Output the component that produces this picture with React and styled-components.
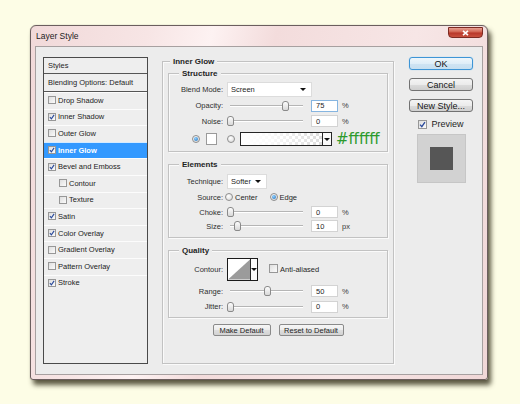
import React from 'react';
import styled, { createGlobalStyle } from 'styled-components';

const GlobalStyle = createGlobalStyle`
  html, body { margin: 0; padding: 0; }
  body {
    background: #fdfde6;
    font-family: 'Liberation Sans', Arial, sans-serif;
    color: #262626;
  }
`;

const Page = styled.div`
  width: 520px;
  height: 404px;
  box-sizing: border-box;
  padding: 25px 0 0 30px;
  background: #fdfde6;
`;

const Window = styled.div`
  width: 458px;
  height: 355px;
  box-sizing: border-box;
  display: flex;
  flex-direction: column;
  padding: 0 4px 4px;
  border: 1px solid #6b5e5e;
  border-radius: 6px 6px 3px 3px;
  background: linear-gradient(103deg, #f1d9d9 0%, #f7e5e5 22%, #fdf2f2 34%, #f3dcdc 46%, #f7e6e6 72%, #f0d7d7 100%);
  box-shadow: 3px 5px 5px rgba(48, 44, 22, 0.78), 0 0 1px rgba(0, 0, 0, 0.4);
`;

const TitleBar = styled.div`
  height: 20px;
  display: flex;
  justify-content: space-between;
`;

const Title = styled.span`
  align-self: center;
  padding-left: 1px;
  font-size: 8.5px;
  color: #1c1c1c;
`;

const CloseButton = styled.div`
  width: 35px;
  height: 11px;
  margin-top: 1px;
  box-sizing: border-box;
  display: flex;
  align-items: center;
  justify-content: center;
  border: 1px solid #7d2a22;
  border-radius: 0 0 4px 4px;
  background: linear-gradient(#e7a193 0%, #d0614f 45%, #b8372a 55%, #c9513f 100%);
`;

const Panel = styled.div`
  flex: 1;
  display: flex;
  align-items: flex-start;
  padding: 10px 0 0 7px;
  border: 1px solid #a7a0a0;
  background: #ececec;
`;

/* ---- left list ---- */

const StylesList = styled.div`
  width: 105px;
  height: 307px;
  box-sizing: border-box;
  border: 1px solid #4a4a4a;
  background: #eeeeee;
  font-size: 7.5px;
`;

const HeadRow = styled.div`
  height: ${p => p.$h}px;
  display: flex;
  align-items: center;
  padding-left: 4px;
  border-bottom: 1px solid #555;
  color: #1e1e1e;
`;

const EffectRow = styled.div`
  height: 16.6px;
  box-sizing: border-box;
  display: flex;
  align-items: center;
  gap: 2px;
  padding-left: ${p => (p.$indent ? 15 : 4)}px;
  background: ${p => (p.$active ? '#3399ff' : 'transparent')};
  color: ${p => (p.$active ? '#fff' : '#222')};
  font-weight: ${p => (p.$active ? 'bold' : 'normal')};
  box-shadow: inset 0 1px 0 rgba(255, 255, 255, 0.8);
`;

const Box = styled.span`
  width: ${p => p.$size}px;
  height: ${p => p.$size}px;
  flex-shrink: 0;
  box-sizing: border-box;
  display: inline-flex;
  align-items: center;
  justify-content: center;
  border: 1px solid #979797;
  background: linear-gradient(135deg, #dedede, #fbfbfb);
`;

const Checkbox = ({ checked, size = 8 }) => (
  <Box $size={size}>
    {checked && (
      <svg width={size - 2} height={size - 2} viewBox="0 0 8 8">
        <path d="M1.2 4.2 L3.2 6.4 L6.8 1.2" fill="none" stroke="#2a4a9c" strokeWidth="1.5" />
      </svg>
    )}
  </Box>
);

/* ---- middle groups ---- */

const MainGroup = styled.fieldset`
  width: 232px;
  height: 307px;
  margin: 0 0 0 14px;
  padding: 3px 5px 0;
  box-sizing: border-box;
  min-width: 0;
  border: 1px solid #c2c2c2;
  box-shadow: 1px 1px 0 #fafafa, inset 1px 1px 0 #fafafa;
`;

const SubGroup = styled.fieldset`
  margin: ${p => p.$mt || 0}px 0 0;
  padding: ${p => p.$pt}px 0 ${p => p.$pb}px;
  min-width: 0;
  border: 1px solid #c2c2c2;
  box-shadow: 1px 1px 0 #fafafa, inset 1px 1px 0 #fafafa;
`;

const Legend = styled.legend`
  margin-left: ${p => p.$ml}px;
  padding: 0 3px;
  line-height: 9px;
  font-size: 8px;
  font-weight: bold;
  color: #1f1f1f;
  background: #ececec;
`;

const Row = styled.div`
  height: ${p => p.$h}px;
  display: flex;
  align-items: center;
  padding-left: ${p => p.$pl || 0}px;
  font-size: 7.5px;
`;

const Label = styled.span`
  width: 54px;
  margin-right: 4px;
  flex-shrink: 0;
  text-align: right;
  color: #2e2e2e;
`;

const Select = styled.div`
  width: ${p => p.$w}px;
  height: 15px;
  box-sizing: border-box;
  display: flex;
  align-items: center;
  justify-content: space-between;
  padding: 0 5px 0 3px;
  border: 1px solid #dcdcdc;
  background: #fff;
`;

const Arrow = styled.span`
  width: 0;
  height: 0;
  border-left: 3px solid transparent;
  border-right: 3px solid transparent;
  border-top: 3px solid #111;
`;

const Track = styled.div`
  position: relative;
  width: 73px;
  height: 2px;
  margin-left: 3px;
  box-sizing: border-box;
  border-top: 1px solid #b5b5b5;
  border-bottom: 1px solid #fff;
`;

const Thumb = styled.span`
  position: absolute;
  top: -5px;
  width: 5px;
  height: 8px;
  margin-left: -3px;
  border: 1px solid #8a8a8a;
  border-radius: 3px 3px 2px 2px;
  background: linear-gradient(#fdfdfd, #d8d8d8);
`;

const Field = styled.span`
  width: 27px;
  height: 12px;
  margin-left: 8px;
  box-sizing: border-box;
  display: flex;
  align-items: center;
  padding-left: 4px;
  border: 1px solid ${p => (p.$focus ? '#86b5e0' : '#d3d3d3')};
  background: #fff;
`;

const Unit = styled.span`
  margin-left: 4px;
  color: #3a3a3a;
`;

const Slider = ({ label, value, pos, unit = '%', focus }) => (
  <>
    <Label>{label}</Label>
    <Track>
      <Thumb style={{ left: `${pos}%` }} />
    </Track>
    <Field $focus={focus}>{value}</Field>
    <Unit>{unit}</Unit>
  </>
);

const Radio = styled.span`
  width: 8px;
  height: 8px;
  margin-left: ${p => p.$ml || 0}px;
  flex-shrink: 0;
  box-sizing: border-box;
  display: inline-flex;
  align-items: center;
  justify-content: center;
  border: 1px solid #8e8e8e;
  border-radius: 50%;
  background: radial-gradient(circle at 40% 35%, #fff, #d6d6d6);
  &::after {
    content: '';
    display: ${p => (p.$on ? 'block' : 'none')};
    width: 4px;
    height: 4px;
    border-radius: 50%;
    background: radial-gradient(circle at 40% 35%, #8fd0ff, #1c6cb8);
  }
`;

const Text = styled.span`
  margin-left: ${p => p.$ml || 0}px;
`;

const Swatch = styled.span`
  width: 11px;
  height: 12px;
  margin-left: 6px;
  box-sizing: border-box;
  border: 1px solid #9a9a9a;
  background: #fff;
`;

const GradientPicker = styled.div`
  width: 92px;
  height: 14px;
  margin-left: 5px;
  box-sizing: border-box;
  display: flex;
  border: 1px solid #262626;
`;

const GradientFill = styled.span`
  flex: 1;
  background:
    linear-gradient(to right, #fff 0%, rgba(255, 255, 255, 0.85) 35%, rgba(255, 255, 255, 0) 100%),
    repeating-conic-gradient(#dcdcdc 0 25%, #fff 0 50%) 0 0 / 6px 6px;
`;

const PickerButton = styled.span`
  width: ${p => p.$w}px;
  display: flex;
  align-items: center;
  justify-content: center;
  border-left: 1px solid #262626;
  background: #fafafa;
`;

const Hex = styled.span`
  margin-left: 4px;
  font-family: 'DejaVu Sans', sans-serif;
  font-size: 15px;
  line-height: 1;
  color: #2c9a2c;
`;

const ContourPicker = styled.div`
  width: 31px;
  height: 23px;
  box-sizing: border-box;
  display: flex;
  border: 1px solid #1a1a1a;
  background: #fff;
`;

const ButtonRow = styled.div`
  display: flex;
  justify-content: center;
  gap: 8px;
  margin-top: 6px;
`;

const SmallButton = styled.button`
  width: ${p => p.$w}px;
  height: 12px;
  padding: 0;
  border: 1px solid #8a8a8a;
  border-radius: 2px;
  background: linear-gradient(#f6f6f6 0%, #ececec 50%, #dedede 51%, #d2d2d2 100%);
  font-family: inherit;
  font-size: 7.5px;
  color: #1e1e1e;
`;

/* ---- right column ---- */

const Actions = styled.div`
  width: 64px;
  margin-left: 15px;
  display: flex;
  flex-direction: column;
  align-items: center;
  gap: 8px;
`;

const DialogButton = styled.button`
  width: 64px;
  height: 13px;
  padding: 0;
  border: 1px solid ${p => (p.$primary ? '#3d95d6' : '#727272')};
  border-radius: 3px;
  background: ${p =>
    p.$primary
      ? 'linear-gradient(#eef6fb 0%, #dfeef8 50%, #cfe4f3 51%, #c6dff0 100%)'
      : 'linear-gradient(#f4f4f4 0%, #ebebeb 50%, #dcdcdc 51%, #cfcfcf 100%)'};
  box-shadow: ${p => (p.$primary ? '0 0 1px #7cc4f5' : 'none')};
  font-family: inherit;
  font-size: 9px;
  color: #151515;
`;

const PreviewToggle = styled.div`
  height: 16px;
  margin-top: -4px;
  display: flex;
  align-items: center;
  gap: 4px;
  font-size: 9px;
  color: #1e1e1e;
`;

const PreviewSwatch = styled.div`
  width: 49px;
  height: 49px;
  margin-top: -6px;
  box-sizing: border-box;
  display: flex;
  align-items: center;
  justify-content: center;
  border: 1px solid #c6c6c6;
  background: #d2d2d2;
`;

const PreviewSquare = styled.span`
  width: 23px;
  height: 23px;
  background: #565656;
`;

const effects = [
  { name: 'Drop Shadow', on: false },
  { name: 'Inner Shadow', on: true },
  { name: 'Outer Glow', on: false },
  { name: 'Inner Glow', on: true, active: true },
  { name: 'Bevel and Emboss', on: true },
  { name: 'Contour', on: false, indent: true },
  { name: 'Texture', on: false, indent: true },
  { name: 'Satin', on: true },
  { name: 'Color Overlay', on: true },
  { name: 'Gradient Overlay', on: false },
  { name: 'Pattern Overlay', on: false },
  { name: 'Stroke', on: true },
];

export default function App() {
  return (
    <Page>
      <GlobalStyle />
      <Window>
        <TitleBar>
          <Title>Layer Style</Title>
          <CloseButton>
            <svg width="7" height="6" viewBox="0 0 7 6">
              <path d="M1 0.8 L6 5.2 M6 0.8 L1 5.2" stroke="#fff" strokeWidth="1.6" />
            </svg>
          </CloseButton>
        </TitleBar>

        <Panel>
          <StylesList>
            <HeadRow $h={15}>Styles</HeadRow>
            <HeadRow $h={17}>Blending Options: Default</HeadRow>
            {effects.map(e => (
              <EffectRow key={e.name} $indent={e.indent} $active={e.active}>
                <Checkbox checked={e.on} />
                {e.name}
              </EffectRow>
            ))}
          </StylesList>

          <MainGroup>
            <Legend $ml={2}>Inner Glow</Legend>

            <SubGroup $pt={3} $pb={1}>
              <Legend $ml={10}>Structure</Legend>
              <Row $h={16}>
                <Label>Blend Mode:</Label>
                <Select $w={85}>Screen<Arrow /></Select>
              </Row>
              <Row $h={17}>
                <Slider label="Opacity:" value="75" pos={75} focus />
              </Row>
              <Row $h={14}>
                <Slider label="Noise:" value="0" pos={0} />
              </Row>
              <Row $h={22} $pl={23}>
                <Radio $on />
                <Swatch />
                <Radio $ml={10} />
                <GradientPicker>
                  <GradientFill />
                  <PickerButton $w={8}><Arrow /></PickerButton>
                </GradientPicker>
                <Hex>#ffffff</Hex>
              </Row>
            </SubGroup>

            <SubGroup $mt={8} $pt={4} $pb={4}>
              <Legend $ml={10}>Elements</Legend>
              <Row $h={16}>
                <Label>Technique:</Label>
                <Select $w={40}>Softer<Arrow /></Select>
              </Row>
              <Row $h={16}>
                <Label>Source:</Label>
                <Radio $ml={-2} />
                <Text $ml={2}>Center</Text>
                <Radio $ml={12} $on />
                <Text $ml={2}>Edge</Text>
              </Row>
              <Row $h={14}>
                <Slider label="Choke:" value="0" pos={0} />
              </Row>
              <Row $h={14}>
                <Slider label="Size:" value="10" pos={10} unit="px" />
              </Row>
            </SubGroup>

            <SubGroup $mt={8} $pt={3} $pb={5}>
              <Legend $ml={10}>Quality</Legend>
              <Row $h={23}>
                <Label>Contour:</Label>
                <ContourPicker>
                  <svg width="23" height="21" viewBox="0 0 23 21">
                    <polygon points="0,21 23,0 23,21" fill="#9b9b9b" />
                  </svg>
                  <PickerButton $w={6}><Arrow /></PickerButton>
                </ContourPicker>
                <Text $ml={11}><Checkbox size={9} /></Text>
                <Text $ml={2}>Anti-aliased</Text>
              </Row>
              <Row $h={20}>
                <Slider label="Range:" value="50" pos={50} />
              </Row>
              <Row $h={11}>
                <Slider label="Jitter:" value="0" pos={0} />
              </Row>
            </SubGroup>

            <ButtonRow>
              <SmallButton $w={58}>Make Default</SmallButton>
              <SmallButton $w={65}>Reset to Default</SmallButton>
            </ButtonRow>
          </MainGroup>

          <Actions>
            <DialogButton $primary>OK</DialogButton>
            <DialogButton>Cancel</DialogButton>
            <DialogButton>New Style...</DialogButton>
            <PreviewToggle>
              <Checkbox checked size={9} />
              Preview
            </PreviewToggle>
            <PreviewSwatch>
              <PreviewSquare />
            </PreviewSwatch>
          </Actions>
        </Panel>
      </Window>
    </Page>
  );
}
